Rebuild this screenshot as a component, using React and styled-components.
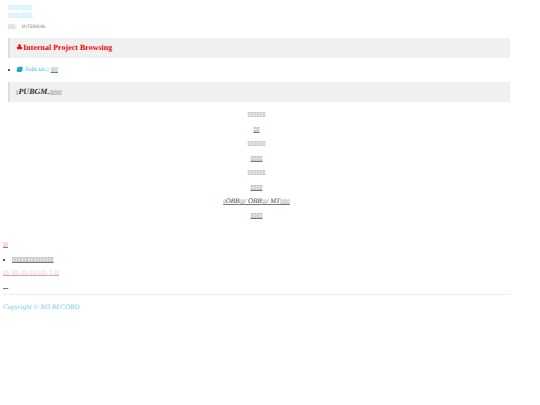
import React from 'react'
import styled, { createGlobalStyle } from 'styled-components'

const GlobalStyles = createGlobalStyle`
    * {
        box-sizing: border-box;
    }
    body {
        margin: 0;
        background: white;
        color: #555;
        font-family: 'Liberation Serif', serif;
        font-size: 7px;
        line-height: 8px;
        text-rendering: geometricPrecision;
    }
`

const PageStyles = styled.main`
    padding: 3px 30px 0 3px;
`

const IntroStyles = styled.header`
    padding-left: 5px;
    color: #6fdcf8;
    p {
        margin: 0;
    }
`

const TagStyles = styled.p`
    display: flex;
    gap: 5px;
    margin: 5px 0 6px 5px;
    font-size: 5px;
    color: #777;
`

const QuoteStyles = styled.h2`
    margin: 0 0 0 5px;
    padding: 5px 6px;
    border-left: 2px solid #ddd;
    background: #f0f0f0;
    font-size: 8px;
    line-height: 10px;
    font-style: ${(props) => (props.$italic ? 'italic' : 'normal')};
    color: ${(props) => (props.$red ? '#f00000' : '#333')};
`

const ClubStyles = styled.span`
    font-family: 'DejaVu Sans', sans-serif;
    font-size: 8px;
    font-weight: normal;
    line-height: 1;
`

const ListStyles = styled.ul`
    margin: ${(props) => (props.$join ? '7px 0 8px 5px' : '7px 0 4px')};
    padding: 0;
    list-style: none;
    li {
        display: flex;
        align-items: center;
        gap: ${(props) => (props.$join ? '6px' : '7px')};
        line-height: 9px;
    }
    li::before {
        content: '';
        width: 2px;
        height: 2px;
        border-radius: 50%;
        background: #222;
    }
`

const JoinStyles = styled.span`
    display: flex;
    align-items: center;
    color: #35bfdc;
    svg {
        width: 7px;
        height: 7px;
        margin-right: 2px;
    }
`

const LinkStyles = styled.a`
    color: ${(props) => props.$color || '#444'};
    text-decoration: underline;
    text-decoration-color: ${(props) => props.$line || '#777'};
    font-style: ${(props) => (props.$italic ? 'italic' : 'normal')};
`

const BoxStyles = styled.span`
    font-family: 'DejaVu Sans Condensed', 'DejaVu Sans', sans-serif;
    font-size: ${(props) => (props.$small ? '5px' : '6px')};
    font-style: normal;
    font-weight: normal;
    line-height: 1;
`

const CenterStyles = styled.section`
    padding-top: 8px;
    text-align: center;
`

const RowStyles = styled.p`
    margin: 0 0 ${(props) => (props.$link ? '6px' : '7px')};
`

const NotesStyles = styled.section`
    padding-top: 15px;
    p {
        margin: 0 0 5px;
    }
`

const FooterStyles = styled.footer`
    padding: 8px 0;
    border-top: 1px solid #eee;
    font-style: italic;
    color: #74cbe2;
`

const Boxes = ({ count, small }) => (
    <BoxStyles $small={small}>{'▯'.repeat(count)}</BoxStyles>
)

const rows = [
    { boxes: 6 },
    { boxes: 2, link: true },
    { boxes: 6 },
    { boxes: 4, link: true },
    { boxes: 6 },
    { boxes: 4, link: true },
    { obb: true, link: true },
    { boxes: 4, link: true },
]

const ObbText = () => (
    <>
        <Boxes count={1} small />
        OBB
        <Boxes count={2} small />
        / OBB
        <Boxes count={2} small />
        / MT
        <Boxes count={4} small />
    </>
)

export default function App() {
    return (
        <PageStyles>
            <GlobalStyles />
            <IntroStyles>
                <p>
                    <Boxes count={8} />
                </p>
                <p>
                    <Boxes count={8} />.
                </p>
            </IntroStyles>
            <TagStyles>
                <span>
                    <Boxes count={3} small />.
                </span>
                <span>INTERIOR.</span>
            </TagStyles>
            <QuoteStyles $red>
                <ClubStyles>♣</ClubStyles>
                Internal Project Browsing
            </QuoteStyles>
            <ListStyles $join>
                <li>
                    <JoinStyles>
                        <svg viewBox="0 0 14 14" aria-hidden="true">
                            <path d="M3 2 13 1 13 9 10 12 3 12 1 10Z" fill="#20afc7" />
                            <path d="M2 9 9 10 12 8" fill="none" stroke="#148da5" />
                        </svg>
                        <span>
                            Join us.
                            <Boxes count={1} small />{' '}
                            <LinkStyles href="#join" $line="#4c9a3c">
                                <Boxes count={3} small />
                            </LinkStyles>
                        </span>
                    </JoinStyles>
                </li>
            </ListStyles>
            <QuoteStyles $italic>
                <Boxes count={1} small />
                PUBGM.
                <Boxes count={5} small />
            </QuoteStyles>
            <CenterStyles>
                {rows.map((row, i) => {
                    const content = row.obb ? <ObbText /> : <Boxes count={row.boxes} />
                    return (
                        <RowStyles key={i} $link={row.link}>
                            {row.link ? (
                                <LinkStyles href="#project" $italic={row.obb}>
                                    {content}
                                </LinkStyles>
                            ) : (
                                content
                            )}
                        </RowStyles>
                    )
                })}
            </CenterStyles>
            <NotesStyles>
                <LinkStyles href="#notes" $color="#e83a3a" $line="#e06060">
                    <Boxes count={2} small />
                </LinkStyles>
                <ListStyles>
                    <li>
                        <LinkStyles href="#about">
                            <Boxes count={14} />
                        </LinkStyles>
                    </li>
                </ListStyles>
                <p>
                    <LinkStyles href="#terms" $color="#f0a5a5" $line="#c9a5a5">
                        <Boxes count={2} small />. <Boxes count={3} small />.
                        <Boxes count={3} small />.<Boxes count={3} small />.
                        <Boxes count={3} small />. <Boxes count={1} small />.
                        <Boxes count={2} small />
                    </LinkStyles>
                </p>
                <p>
                    <LinkStyles href="#more">{'\u00a0\u00a0\u00a0'}</LinkStyles>
                </p>
            </NotesStyles>
            <FooterStyles>Copyright © NO RECORD.</FooterStyles>
        </PageStyles>
    )
}
